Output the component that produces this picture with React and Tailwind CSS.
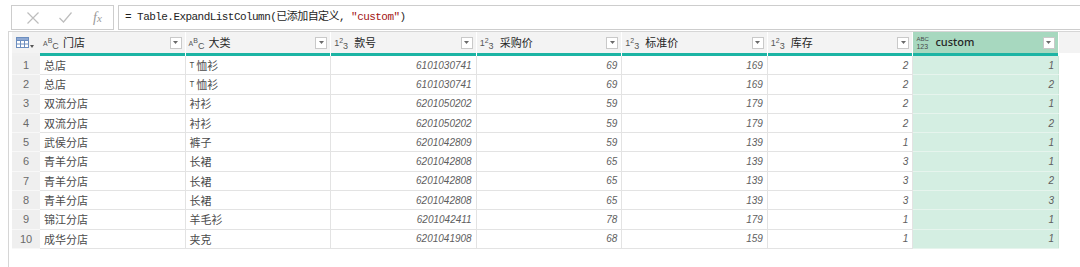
import React from 'react';

const rows = [
  ['总店', 'T恤衫', '6101030741', 69, 169, 2, 1],
  ['总店', 'T恤衫', '6101030741', 69, 169, 2, 2],
  ['双流分店', '衬衫', '6201050202', 59, 179, 2, 1],
  ['双流分店', '衬衫', '6201050202', 59, 179, 2, 2],
  ['武侯分店', '裤子', '6201042809', 59, 139, 1, 1],
  ['青羊分店', '长裙', '6201042808', 65, 139, 3, 1],
  ['青羊分店', '长裙', '6201042808', 65, 139, 3, 2],
  ['青羊分店', '长裙', '6201042808', 65, 139, 3, 3],
  ['锦江分店', '羊毛衫', '6201042411', 78, 179, 1, 1],
  ['成华分店', '夹克', '6201041908', 68, 159, 1, 1],
];

const columns = [
  { name: '门店', type: 'text' },
  { name: '大类', type: 'text' },
  { name: '款号', type: 'num' },
  { name: '采购价', type: 'num' },
  { name: '标准价', type: 'num' },
  { name: '库存', type: 'num' },
  { name: 'custom', type: 'any' },
];

const grid = 'grid grid-cols-[28px_repeat(7,145.57px)]';
const cjk = "font-['Noto_Sans_CJK_SC','Noto_Sans',sans-serif]";

// little A^B_C / 1^2_3 / ABC-123 type badges in the column headers
const TypeIcon = ({ type }) => {
  if (type === 'any') {
    return (
      <span className="flex flex-col w-[13px] text-[7px] leading-[7px] text-[#4a4a4a] font-['Liberation_Sans',sans-serif]">
        <span className="text-[6px] leading-[7px]">ABC</span>
        <span>123</span>
      </span>
    );
  }
  const [a, b, c] = type === 'text' ? ['A', 'B', 'C'] : ['1', '2', '3'];
  return (
    <span className="flex items-start h-[14px] w-[14px] text-[#555] font-['Liberation_Sans',sans-serif] leading-none">
      <span className={type === 'text' ? 'text-[7px] mt-[4px]' : 'text-[9px] mt-[3px]'}>{a}</span>
      <span className="text-[7px] mt-[1px]">{b}</span>
      <span className="text-[9px] mt-[6px]">{c}</span>
    </span>
  );
};

const Dropdown = () => (
  <span className="ml-auto flex items-center justify-center w-[12px] h-[12px] bg-white border border-[#c9c9c9]">
    <svg width="5" height="3" viewBox="0 0 5 3">
      <path d="M0 0h5L2.5 3z" fill="#6a6a6a" />
    </svg>
  </span>
);

const TableIcon = () => (
  <svg width="13" height="11" viewBox="0 0 13 11">
    <rect x="0.5" y="0.5" width="12" height="10" fill="#fff" stroke="#6c8ebf" />
    <rect x="0.5" y="0.5" width="12" height="3" fill="#8fa9d3" stroke="#6c8ebf" />
    <path d="M4.5 3.5v7M8.5 3.5v7M0.5 7h12" stroke="#6c8ebf" />
  </svg>
);

const Cell = ({ value, col, idx }) => {
  const custom = idx === 6;
  const base = `h-full flex items-center border-r ${custom ? 'bg-[#d4eee2] border-[#c9e6d7]' : 'border-[#e3e3e3]'}`;
  if (col.type === 'text') {
    const tee = typeof value === 'string' && value.startsWith('T');
    return (
      <div className={`${base} pl-[4px] text-[11px] text-[#4a4a4a] ${cjk}`}>
        {tee ? (
          <>
            <span className="text-[8px] mr-[2px]">T</span>
            {value.slice(1)}
          </>
        ) : (
          value
        )}
      </div>
    );
  }
  return (
    <div className={`${base} justify-end pr-[4px] text-[10px] italic text-[#5e5e5e] font-['Liberation_Sans',sans-serif]`}>
      {value}
    </div>
  );
};

export default function App() {
  return (
    <div className="w-[1080px] h-[267px] bg-white overflow-hidden">
      {/* formula bar */}
      <div className="flex pt-[5px] pl-[11px] h-[30px]">
        <div className="w-[103px] h-[25px] border border-[#cdcdcd] flex items-center">
          <svg className="ml-[15px]" width="12" height="12" viewBox="0 0 12 12">
            <path d="M0.5 0.5l11 11M11.5 0.5l-11 11" stroke="#bdbdbd" strokeWidth="1.2" />
          </svg>
          <svg className="ml-[20px]" width="13" height="11" viewBox="0 0 13 11">
            <path d="M0.5 6l4 4 8-9.5" stroke="#bdbdbd" strokeWidth="1.2" fill="none" />
          </svg>
          <span className="ml-[21px] font-['Liberation_Serif',serif] italic text-[14px] text-[#9a9a9a] leading-none">
            f<span className="text-[11px]">x</span>
          </span>
        </div>
        <div className="ml-[4px] flex-1 h-[25px] border-y border-l border-[#cdcdcd] flex items-center pl-[6px] text-[11px] tracking-[-0.55px] text-[#1e1e1e] font-['Liberation_Mono','Noto_Sans_CJK_SC',monospace]">
          <span className="whitespace-pre">
            = Table.ExpandListColumn(已添加自定义, <span className="text-[#a31515]">"custom"</span>)
          </span>
        </div>
      </div>

      {/* table */}
      <div className="ml-[8px] mt-[1px] h-[236px] border-l border-t border-[#d6d6d6] pl-[3px]">
        <div className={`${grid} h-[21px] bg-[#f3f3f3]`}>
          <div className="flex items-center pl-[4px] gap-[1px]">
            <TableIcon />
            <svg width="4" height="3" viewBox="0 0 4 3" className="mt-[7px]">
              <path d="M0 0h4L2 3z" fill="#555" />
            </svg>
          </div>
          {columns.map((c, i) => (
            <div
              key={c.name}
              className={`flex items-center pl-[3px] pr-[3px] border-r border-white ${i === 6 ? 'bg-[#a7d8bf]' : ''}`}
            >
              <TypeIcon type={c.type} />
              <span
                className={`ml-[6px] text-[11px] text-[#262626] ${
                  c.type === 'any' ? "font-['Noto_Sans',sans-serif] font-medium text-[10px]" : cjk
                }`}
              >
                {c.name}
              </span>
              <Dropdown />
            </div>
          ))}
        </div>
        <div className={`${grid} h-[3px]`}>
          <div className="bg-[#f0f0f0]" />
          {columns.map((c) => (
            <div key={c.name} className="bg-[#1cb4a4] border-r border-white" />
          ))}
        </div>
        {rows.map((r, ri) => (
          <div key={ri} className={`${grid} h-[19.3px]`}>
            <div className="h-full flex items-center justify-center bg-[#efefef] border-b border-[#f8f8f8] text-[11px] text-[#6a6a6a] font-['Liberation_Sans',sans-serif]">
              {ri + 1}
            </div>
            {columns.map((c, ci) => (
              <div key={c.name} className={`h-full border-b ${ci === 6 ? 'border-[#e6f4ed]' : 'border-[#e3e3e3]'}`}>
                <Cell value={r[ci]} col={c} idx={ci} />
              </div>
            ))}
          </div>
        ))}
      </div>
    </div>
  );
}
